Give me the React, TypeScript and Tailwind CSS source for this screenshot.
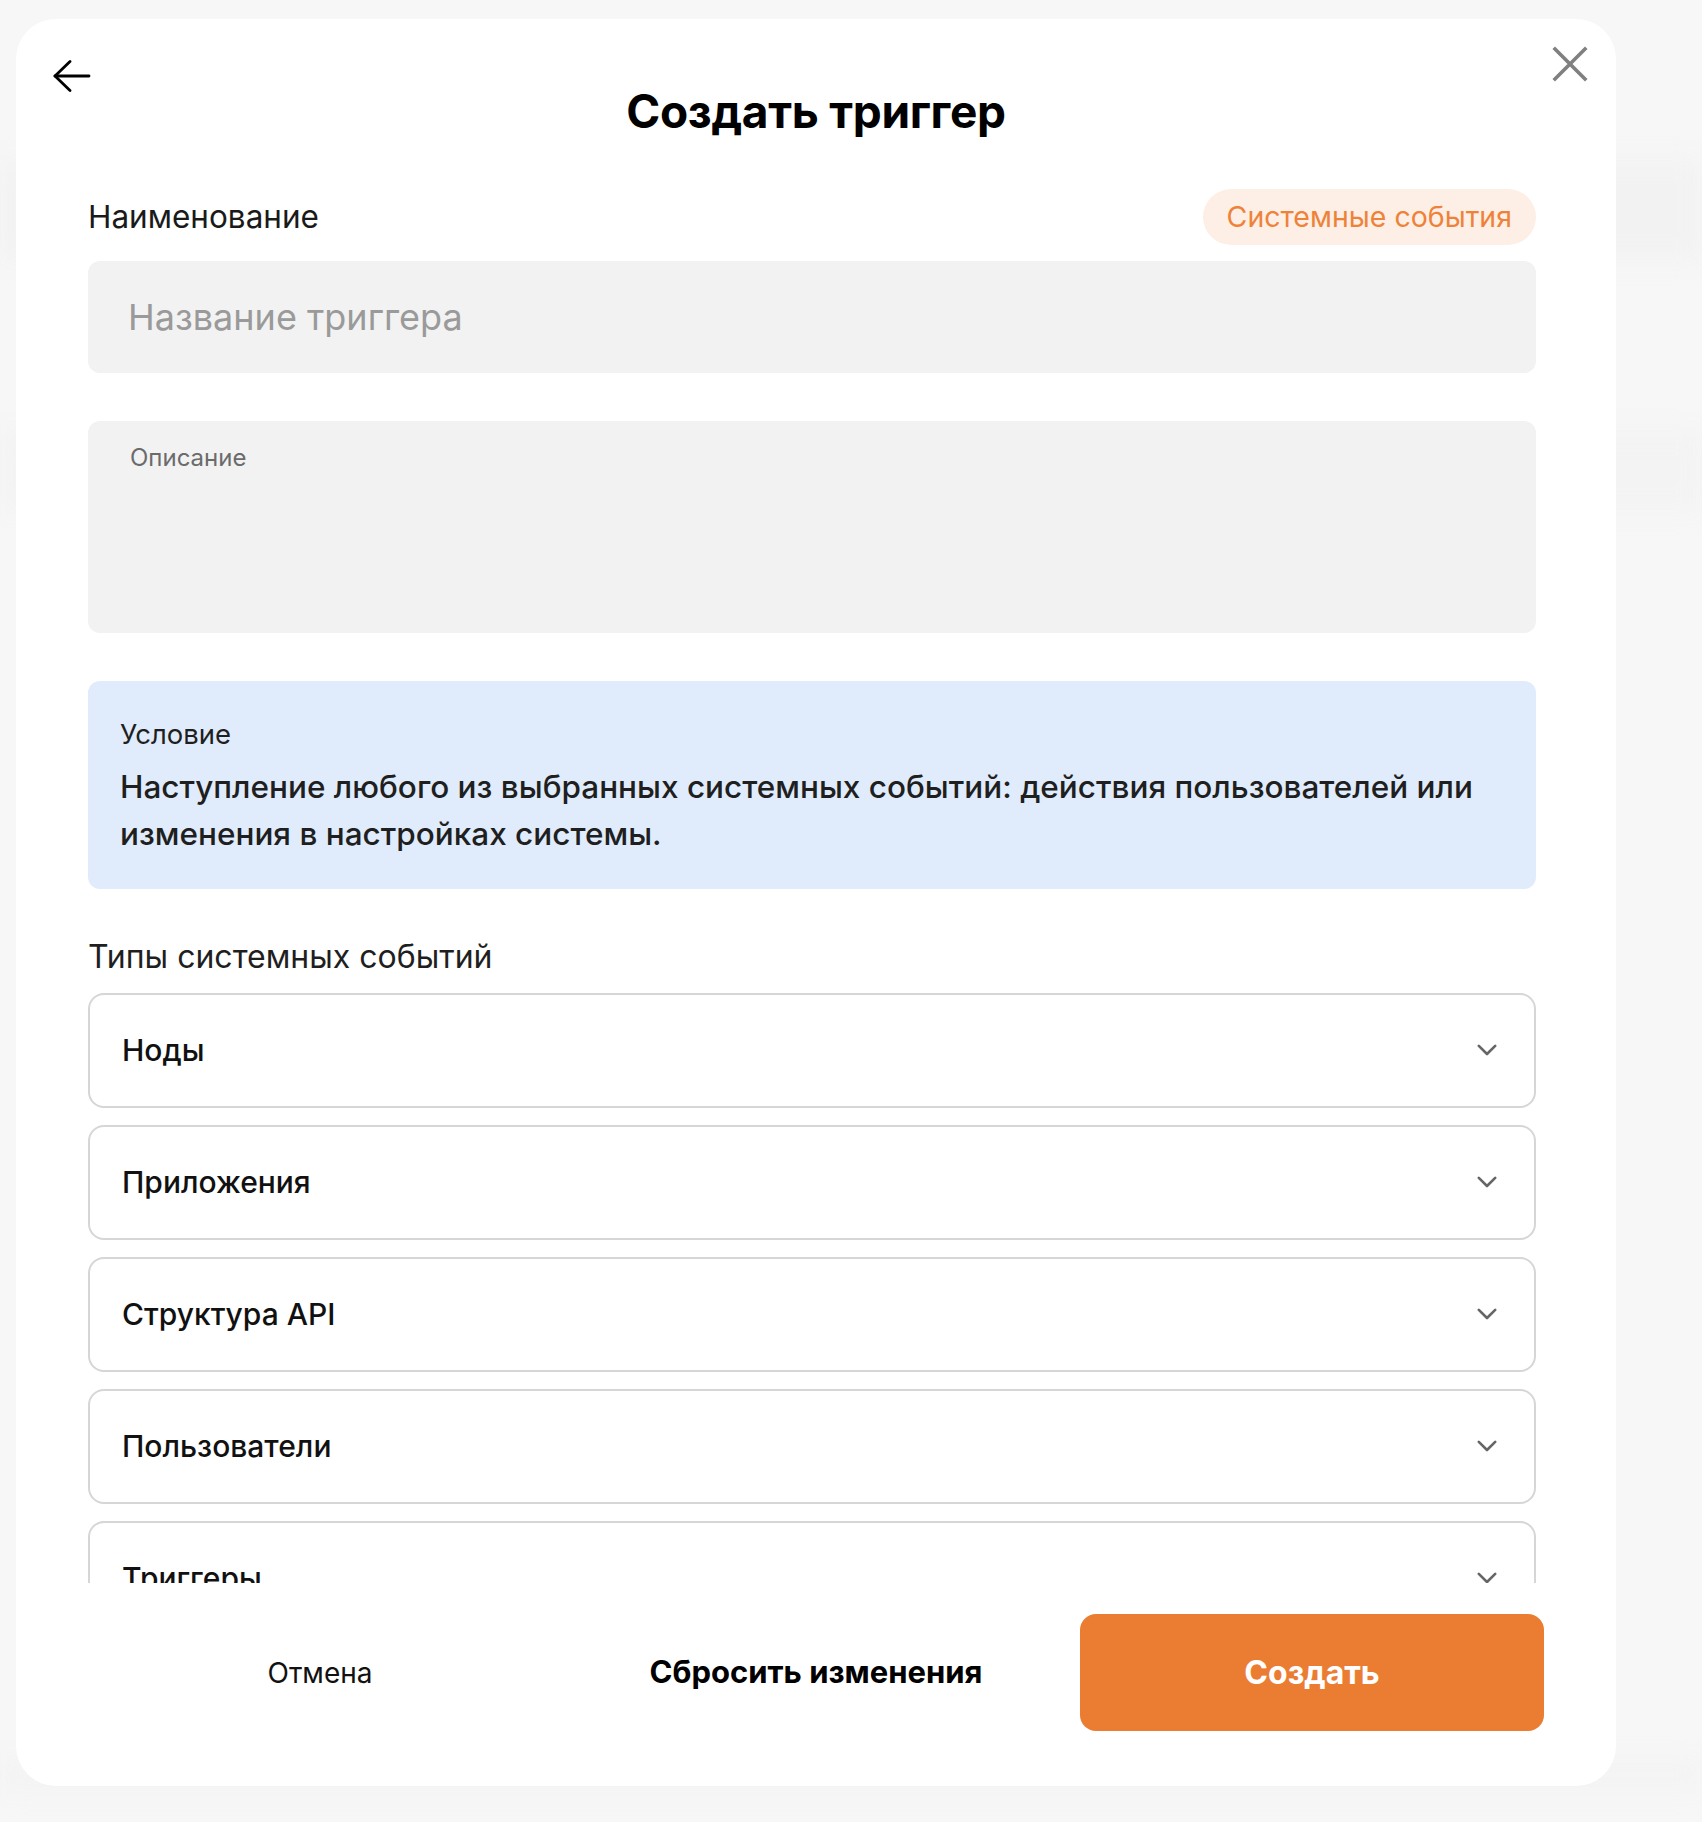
import React from 'react';

const eventTypes = ['Ноды', 'Приложения', 'Структура API', 'Пользователи', 'Триггеры'];

const BackIcon = () => (
  <svg width="38" height="32" viewBox="0 0 38 32" fill="none" stroke="#000" strokeWidth="2.8" strokeLinecap="round" strokeLinejoin="round">
    <path d="M2 16h34" />
    <path d="M17 1.5 2 16l15 14.5" />
  </svg>
);

const CloseIcon = () => (
  <svg width="36" height="36" viewBox="0 0 36 36" fill="none" stroke="#808080" strokeWidth="3.6" strokeLinecap="square">
    <path d="M3 3l30 30M33 3 3 33" />
  </svg>
);

const Chevron = () => (
  <svg width="20" height="13" viewBox="0 0 20 13" fill="none" stroke="#666" strokeWidth="2.6" strokeLinecap="round" strokeLinejoin="round">
    <path d="M1.8 1.8 10 10l8.2-8.2" />
  </svg>
);

export default function App() {
  return (
    <div className="relative min-h-[1822px] overflow-hidden bg-[#f7f7f7] font-['Inter','Noto_Sans',sans-serif] text-[#111]">
      {/* faint page content behind the modal */}
      <div className="absolute inset-0">
        <div className="absolute left-0 right-0 top-[160px] h-[100px] bg-[#f2f2f2] blur-md" />
        <div className="absolute left-0 right-0 top-[430px] h-[80px] bg-[#f3f3f3] blur-md" />
        <div className="absolute left-0 right-0 top-[1760px] h-[30px] bg-[#f3f3f3] blur-md" />
      </div>

      <div className="relative ml-4 mt-[19px] flex h-[1767px] w-[1600px] flex-col rounded-[40px] bg-white">
        <div className="relative h-[116px] shrink-0">
          <button className="absolute left-[37px] top-[41px]">
            <BackIcon />
          </button>
          <button className="absolute right-[28px] top-[27px]">
            <CloseIcon />
          </button>
          <h1 className="pt-[66px] text-center text-[46px] font-bold leading-[52px] tracking-[-0.3px] text-black">
            Создать триггер
          </h1>
        </div>

        <div className="h-[1448px] shrink-0 overflow-hidden pl-[72px] pr-[80px] pt-[54px]">
          <div className="flex h-[56px] items-center justify-between">
            <span className="text-[31.5px] leading-[36px] text-[#1a1a1a]">Наименование</span>
            <span className="flex h-[56px] items-center rounded-full bg-[#fdefe5] px-[24px] text-[28.5px] text-[#ef8239]">
              Системные события
            </span>
          </div>

          <div className="mt-4 flex h-[112px] items-center rounded-[12px] bg-[#f2f2f2] px-[40px]">
            <span className="text-[36px] text-[#9a9a9a]">Название триггера</span>
          </div>

          <div className="mt-[48px] h-[212px] rounded-[12px] bg-[#f2f2f2] px-[42px] pt-[23px]">
            <span className="text-[24px] leading-[28px] text-[#6b6b6b]">Описание</span>
          </div>

          <div className="mt-[48px] h-[208px] rounded-[12px] bg-[#e0ecfc] px-[32px] pt-[37px]">
            <div className="text-[27.5px] leading-[32px] text-[#1f1f1f]">Условие</div>
            <div className="mt-[13px] text-[31.5px] font-medium leading-[47px] text-[#1f1f1f]">
              Наступление любого из выбранных системных событий: действия пользователей или изменения в настройках системы.
            </div>
          </div>

          <div className="mt-[49px] text-[32px] leading-[38px] text-[#1f1f1f]">Типы системных событий</div>

          <div className="mt-[17px] flex flex-col gap-[17px]">
            {eventTypes.map((t) => (
              <div
                key={t}
                className="flex h-[115px] shrink-0 items-center justify-between rounded-[16px] border-2 border-[#d6d6d6] pl-[32px] pr-[37px]"
              >
                <span className="text-[30px] font-medium text-[#111]">{t}</span>
                <Chevron />
              </div>
            ))}
          </div>
        </div>

        <div className="grid grid-cols-3 gap-[32px] px-[72px] pt-[31px]">
          <button className="flex h-[117px] items-center justify-center text-[28px] text-[#111]">Отмена</button>
          <button className="flex h-[117px] items-center justify-center text-[31px] font-bold text-black">
            Сбросить изменения
          </button>
          <button className="flex h-[117px] items-center justify-center rounded-[16px] bg-[#eb7d33] text-[32px] font-bold text-white">
            Создать
          </button>
        </div>
      </div>
    </div>
  );
}
